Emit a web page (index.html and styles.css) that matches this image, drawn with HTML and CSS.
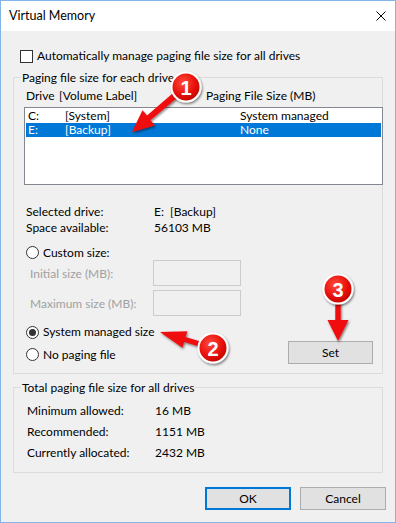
FILE: index.html
```html
<!DOCTYPE html>
<html>
<head>
<meta charset="utf-8">
<title>Virtual Memory</title>
<link rel="stylesheet" href="styles.css">
</head>
<body>
<div class="window">
  <div class="titlebar">
    <span class="title">Virtual Memory</span>
    <svg class="close" width="10" height="10" viewBox="0 0 10 10"><path d="M0.5 0.5 L9.5 9.5 M9.5 0.5 L0.5 9.5" stroke="#000" stroke-width="1" fill="none"/></svg>
  </div>
  <div class="client">
    <div class="check-row"><span class="checkbox"></span><span>Automatically manage paging file size for all drives</span></div>

    <div class="group g1">
      <div class="group-label">Paging file size for each drive</div>
      <div class="list-header">
        <span class="h-drive">Drive</span><span class="h-label">[Volume Label]</span><span>Paging File Size (MB)</span>
      </div>
      <div class="listbox">
        <div class="lrow"><span class="c-drive">C:</span><span class="c-label">[System]</span><span>System managed</span></div>
        <div class="lrow selected"><span class="c-drive">E:</span><span class="c-label">[Backup]</span><span>None</span></div>
      </div>
      <div class="info first"><span class="info-key">Selected drive:</span><span class="pre">E:  [Backup]</span></div>
      <div class="info"><span class="info-key">Space available:</span><span>56103 MB</span></div>
      <div class="radio-row custom"><span class="radio"></span><span>Custom size:</span></div>
      <div class="field-row"><span class="field-label">Initial size (MB):</span><span class="input"></span></div>
      <div class="field-row second"><span class="field-label">Maximum size (MB):</span><span class="input"></span></div>
      <div class="radio-row managed"><span class="radio checked"></span><span>System managed size</span></div>
      <div class="last-row">
        <div class="radio-row nopaging"><span class="radio"></span><span>No paging file</span></div>
        <div class="button set">Set</div>
      </div>
    </div>

    <div class="group g2">
      <div class="group-label">Total paging file size for all drives</div>
      <div class="totals">
        <div class="trow"><span class="t-key">Minimum allowed:</span><span>16 MB</span></div>
        <div class="trow"><span class="t-key">Recommended:</span><span>1151 MB</span></div>
        <div class="trow"><span class="t-key">Currently allocated:</span><span>2432 MB</span></div>
      </div>
    </div>

    <div class="buttons">
      <div class="button ok">OK</div>
      <div class="button">Cancel</div>
    </div>
  </div>

  <svg class="annotations" width="396" height="523" viewBox="0 0 396 523">
    <defs>
      <filter id="sh" x="-30%" y="-30%" width="160%" height="160%">
        <feDropShadow dx="1" dy="1.5" stdDeviation="1.2" flood-color="#000" flood-opacity="0.5"/>
      </filter>
      <radialGradient id="red" cx="40%" cy="35%" r="70%">
        <stop offset="0" stop-color="#ff4a3f"/>
        <stop offset="0.6" stop-color="#e8110a"/>
        <stop offset="1" stop-color="#b80000"/>
      </radialGradient>
    </defs>
    <g filter="url(#sh)" fill="#f01010">
      <polygon points="187,89.4 150.4,120.2 155,125.5 132,132 142.5,110.3 147,115.4 183,84.6"/>
      <polygon points="213.7,345.6 185.6,337.1 187.4,331.2 160,332 182.4,347.8 184.2,341.9 212.3,350.4"/>
      <polygon points="335.3,289 335.3,320 327.5,320 338,341 348.5,320 340.7,320 340.7,289"/>
    </g>
    <g filter="url(#sh)">
      <circle cx="186" cy="87" r="14.5" fill="url(#red)" stroke="#fff" stroke-width="2"/>
      <circle cx="213" cy="348" r="14.5" fill="url(#red)" stroke="#fff" stroke-width="2"/>
      <circle cx="338" cy="289" r="14.5" fill="url(#red)" stroke="#fff" stroke-width="2"/>
    </g>
    <g class="badge-num">
      <text x="186" y="94.5">1</text>
      <text x="213" y="355.5">2</text>
      <text x="338" y="296.5">3</text>
    </g>
  </svg>
</div>
</body>
</html>
```

FILE: styles.css
```css
html, body {
  margin: 0;
  padding: 0;
  background: #f0f0f0;
}

.window {
  position: relative;
  width: 396px;
  height: 523px;
  box-sizing: border-box;
  border: 1px solid #83b5e8;
  background: #f0f0f0;
  font-family: Lato, "Open Sans", "Liberation Sans", sans-serif;
  font-size: 12px;
  color: #000;
  overflow: hidden;
}

.titlebar {
  height: 30px;
  background: #fff;
  display: flex;
  align-items: center;
  justify-content: space-between;
  padding: 0 9px 0 8px;
}

.title {
  font-size: 12.5px;
  line-height: 16px;
}

.close {
  display: block;
}

.client {
  padding: 0 12px;
}

.check-row {
  display: flex;
  align-items: center;
  margin-top: 17px;
  margin-left: 7px;
  height: 16px;
  line-height: 16px;
}

.checkbox {
  width: 13px;
  height: 13px;
  box-sizing: border-box;
  border: 1px solid #333;
  background: #fff;
  margin-right: 4px;
  flex: none;
}

.group {
  border: 1px solid #dcdcdc;
}

.g1 {
  margin-top: 13px;
  padding-bottom: 9px;
}

.g2 {
  margin-top: 13px;
  padding-bottom: 9px;
}

.group-label {
  margin: -8px 0 0 7px;
  padding: 0 1px;
  width: fit-content;
  line-height: 15px;
  background: #f0f0f0;
}

.list-header {
  display: flex;
  margin-top: 3px;
  padding-left: 12px;
  line-height: 15px;
}

.h-drive { width: 33px; }
.h-label { width: 147px; }

.listbox {
  margin: 4px -1px 0 10px;
  height: 78px;
  box-sizing: border-box;
  border: 1px solid #828790;
  background: #fff;
  padding-top: 1px;
}

.lrow {
  display: flex;
  height: 14px;
  line-height: 14px;
  padding-left: 2px;
  margin: 0 1px;
}

.lrow.selected {
  background: #0078d7;
  color: #fff;
}

.c-drive { width: 37px; }
.c-label { width: 175px; }

.info {
  display: flex;
  line-height: 16px;
  padding-left: 12px;
}

.info.first {
  margin-top: 19px;
}

.info-key { width: 128px; }

.pre { white-space: pre; }

.radio-row {
  display: flex;
  align-items: center;
  padding-left: 12px;
  line-height: 15px;
}

.radio-row.custom { margin-top: 9px; }
.radio-row.managed { margin-top: 8px; line-height: 16px; }
.radio-row.nopaging { margin-top: 6px; }

.radio {
  width: 13px;
  height: 13px;
  box-sizing: border-box;
  border: 1px solid #333;
  border-radius: 50%;
  background: #fff;
  margin-right: 4px;
  flex: none;
  display: flex;
  align-items: center;
  justify-content: center;
}

.radio.checked::after {
  content: "";
  width: 7px;
  height: 7px;
  border-radius: 50%;
  background: #333;
}

.field-row {
  display: flex;
  align-items: center;
  height: 26px;
  padding-left: 16px;
  color: #a0a0a0;
}

.field-row.second { margin-top: 4px; }

.field-label { width: 123px; }

.input {
  width: 88px;
  height: 26px;
  box-sizing: border-box;
  border: 1px solid #cccccc;
  background: #f0f0f0;
}

.last-row {
  display: flex;
  justify-content: space-between;
  align-items: flex-start;
  margin-top: 1px;
}

.button {
  width: 86px;
  height: 23px;
  box-sizing: border-box;
  border: 1px solid #adadad;
  background: #e1e1e1;
  display: flex;
  align-items: center;
  justify-content: center;
  line-height: 15px;
}

.button.set {
  width: 85px;
  margin-right: 9px;
}

.button.ok {
  border: 2px solid #0078d7;
}

.totals {
  margin-top: 5px;
  padding-left: 13px;
}

.trow {
  display: flex;
  height: 21px;
  line-height: 21px;
}

.t-key { width: 128px; }

.buttons {
  display: flex;
  justify-content: flex-end;
  gap: 9px;
  margin-top: 14px;
  margin-right: -3px;
}

.annotations {
  position: absolute;
  left: -1px;
  top: -1px;
  pointer-events: none;
}

.badge-num text {
  font-family: "Liberation Sans", Arial, sans-serif;
  font-weight: bold;
  font-size: 20px;
  fill: #fff;
  text-anchor: middle;
}
```
